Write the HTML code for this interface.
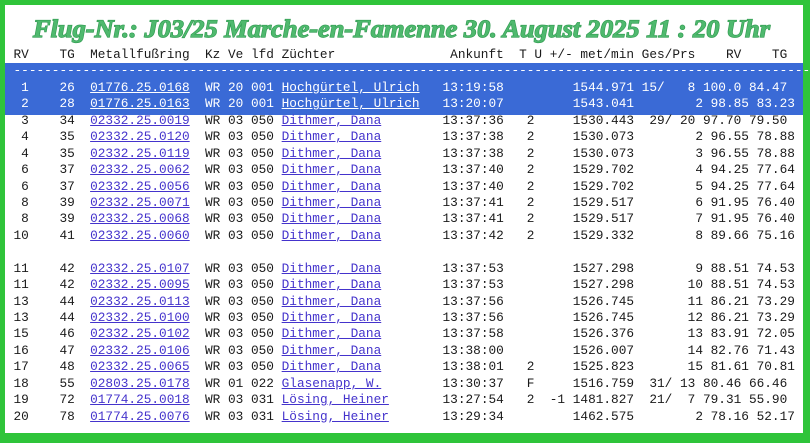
<!DOCTYPE html>
<html><head><meta charset="utf-8"><style>
html,body{margin:0;padding:0}
body{width:810px;height:443px;position:relative;overflow:hidden;background:#2fc43a;}
#w{position:absolute;left:5px;top:5px;width:798px;height:428px;background:#fff;}
#band{position:absolute;left:5px;top:63px;width:798px;height:52px;background:#3a6ad6;}
pre{position:absolute;left:13.5px;top:47px;margin:0;font-family:"Liberation Mono",monospace;font-size:12.77px;line-height:16.43px;color:#1a1a1a;}
a{color:#4433cc;text-decoration:underline;}
.s,.s a{color:#fff;}
.d{color:#fff;}
svg{position:absolute;left:0;top:0}
</style></head><body>
<div id="w"></div><div id="band"></div>
<svg width="810" height="50"><text x="33" y="37" textLength="737" lengthAdjust="spacingAndGlyphs" font-family="Liberation Serif" font-weight="bold" font-style="italic" font-size="25" fill="#4fb96e" stroke="#2f9a4f" stroke-width="1.2" paint-order="stroke">Flug-Nr.: J03/25  Marche-en-Famenne  30. August 2025 11 : 20 Uhr</text></svg>
<pre>RV    TG  Metallfußring  Kz Ve lfd Züchter               Ankunft  T U +/- met/min Ges/Prs    RV    TG
<span class="d">----------------------------------------------------------------------------------------------------------</span>
<span class="s"> 1    26  <a>01776.25.0168</a>  WR 20 001 <a>Hochgürtel, Ulrich</a>   13:19:58         1544.971 15/   8 100.0 84.47</span>
<span class="s"> 2    28  <a>01776.25.0163</a>  WR 20 001 <a>Hochgürtel, Ulrich</a>   13:20:07         1543.041        2 98.85 83.23</span>
 3    34  <a>02332.25.0019</a>  WR 03 050 <a>Dithmer, Dana</a>        13:37:36   2     1530.443  29/ 20 97.70 79.50
 4    35  <a>02332.25.0120</a>  WR 03 050 <a>Dithmer, Dana</a>        13:37:38   2     1530.073        2 96.55 78.88
 4    35  <a>02332.25.0119</a>  WR 03 050 <a>Dithmer, Dana</a>        13:37:38   2     1530.073        3 96.55 78.88
 6    37  <a>02332.25.0062</a>  WR 03 050 <a>Dithmer, Dana</a>        13:37:40   2     1529.702        4 94.25 77.64
 6    37  <a>02332.25.0056</a>  WR 03 050 <a>Dithmer, Dana</a>        13:37:40   2     1529.702        5 94.25 77.64
 8    39  <a>02332.25.0071</a>  WR 03 050 <a>Dithmer, Dana</a>        13:37:41   2     1529.517        6 91.95 76.40
 8    39  <a>02332.25.0068</a>  WR 03 050 <a>Dithmer, Dana</a>        13:37:41   2     1529.517        7 91.95 76.40
10    41  <a>02332.25.0060</a>  WR 03 050 <a>Dithmer, Dana</a>        13:37:42   2     1529.332        8 89.66 75.16

11    42  <a>02332.25.0107</a>  WR 03 050 <a>Dithmer, Dana</a>        13:37:53         1527.298        9 88.51 74.53
11    42  <a>02332.25.0095</a>  WR 03 050 <a>Dithmer, Dana</a>        13:37:53         1527.298       10 88.51 74.53
13    44  <a>02332.25.0113</a>  WR 03 050 <a>Dithmer, Dana</a>        13:37:56         1526.745       11 86.21 73.29
13    44  <a>02332.25.0100</a>  WR 03 050 <a>Dithmer, Dana</a>        13:37:56         1526.745       12 86.21 73.29
15    46  <a>02332.25.0102</a>  WR 03 050 <a>Dithmer, Dana</a>        13:37:58         1526.376       13 83.91 72.05
16    47  <a>02332.25.0106</a>  WR 03 050 <a>Dithmer, Dana</a>        13:38:00         1526.007       14 82.76 71.43
17    48  <a>02332.25.0065</a>  WR 03 050 <a>Dithmer, Dana</a>        13:38:01   2     1525.823       15 81.61 70.81
18    55  <a>02803.25.0178</a>  WR 01 022 <a>Glasenapp, W.</a>        13:30:37   F     1516.759  31/ 13 80.46 66.46
19    72  <a>01774.25.0018</a>  WR 03 031 <a>Lösing, Heiner</a>       13:27:54   2  -1 1481.827  21/  7 79.31 55.90
20    78  <a>01774.25.0076</a>  WR 03 031 <a>Lösing, Heiner</a>       13:29:34         1462.575        2 78.16 52.17</pre>
</body></html>
